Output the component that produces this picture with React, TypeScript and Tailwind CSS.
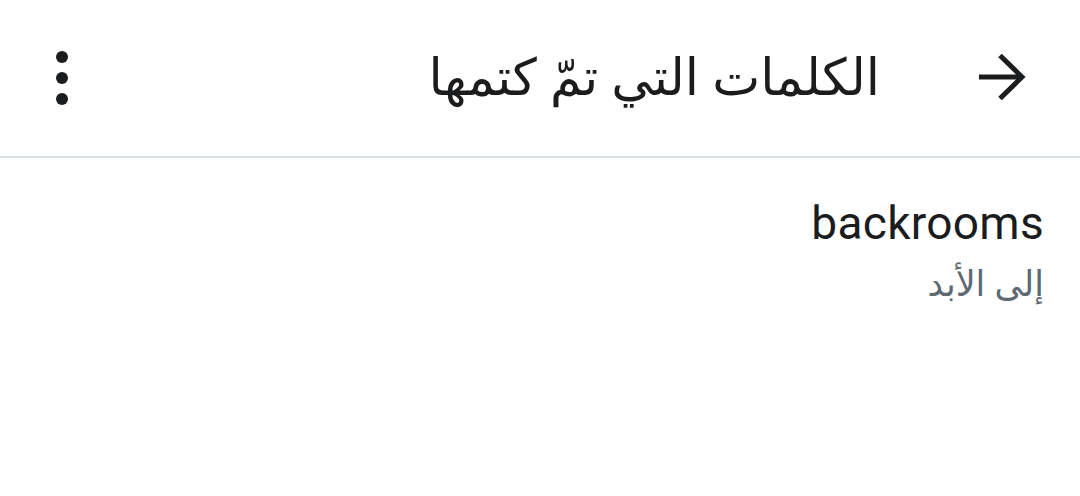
import React from 'react';

const ArrowForward: React.FC = () => (
  <svg width="48" height="48" viewBox="0 0 48 48" fill="none" stroke="#1b1c1e" strokeWidth="5" strokeLinecap="butt">
    <path d="M1 23h42" />
    <path d="M22 1.5l22 21.5-22 21.5" />
  </svg>
);

const Kebab: React.FC = () => (
  <div className="flex flex-col items-center gap-[9px]">
    <span className="block w-[12px] h-[12px] rounded-full bg-[#1b1c1e]" />
    <span className="block w-[12px] h-[12px] rounded-full bg-[#1b1c1e]" />
    <span className="block w-[12px] h-[12px] rounded-full bg-[#1b1c1e]" />
  </div>
);

export default function App() {
  return (
    <div
      dir="rtl"
      className="w-[1080px] h-[496px] bg-white text-[#1b1c1e]"
      style={{ fontFamily: '"Noto Sans", "DejaVu Sans", Roboto, sans-serif' }}
    >
      <header className="h-[158px] flex items-center border-b-2 border-[#d8dfe0] pr-[54px] pl-[56px]">
        <ArrowForward />
        <h1 className="mr-[98px] text-[51px] leading-none pb-[5px]">الكلمات التي تمّ كتمها</h1>
        <div className="mr-auto">
          <Kebab />
        </div>
      </header>
      <div className="pr-[36px] pt-[36px] flex flex-col items-start">
        <div className="text-[46px] leading-[58px] tracking-[0.3px]" style={{ fontFamily: 'Roboto, "Noto Sans", sans-serif' }}>
          backrooms
        </div>
        <div className="text-[35px] leading-[50px] mt-[6px] text-[#5d6a72]">إلى الأبد</div>
      </div>
    </div>
  );
}
